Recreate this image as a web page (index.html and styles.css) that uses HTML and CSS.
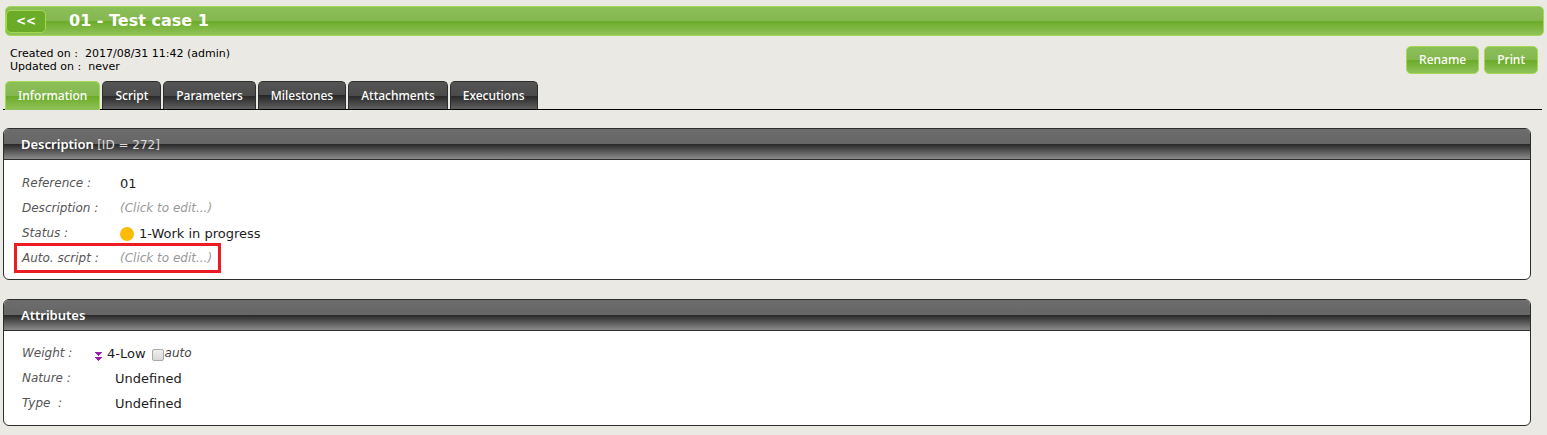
FILE: index.html
```html
<!DOCTYPE html>
<html lang="en">
<head>
<meta charset="utf-8">
<title>01 - Test case 1</title>
<link rel="stylesheet" href="styles.css">
</head>
<body>
<header class="title-bar">
  <button class="back" type="button">&lt;&lt;</button>
  <h1 class="title">01 - Test case 1</h1>
</header>
<div class="toolbar">
  <div class="audit">
    <div class="audit-line"><span>Created on :</span><span>2017/08/31 11:42 (admin)</span></div>
    <div class="audit-line"><span>Updated on :</span><span>never</span></div>
  </div>
  <div class="actions">
    <button class="action" type="button">Rename</button>
    <button class="action" type="button">Print</button>
  </div>
</div>
<nav class="tabs">
  <a class="tab active" href="#information">Information</a>
  <a class="tab" href="#script">Script</a>
  <a class="tab" href="#parameters">Parameters</a>
  <a class="tab" href="#milestones">Milestones</a>
  <a class="tab" href="#attachments">Attachments</a>
  <a class="tab" href="#executions">Executions</a>
</nav>
<main class="panels" id="information">
  <section class="panel">
    <h2 class="panel-head">Description <span class="panel-id">[ID = 272]</span></h2>
    <dl class="fields">
      <div class="row"><dt>Reference :</dt><dd>01</dd></div>
      <div class="row"><dt>Description :</dt><dd class="empty">(Click to edit...)</dd></div>
      <div class="row"><dt>Status :</dt><dd><span class="dot"></span>1-Work in progress</dd></div>
      <div class="row marked"><dt>Auto. script :</dt><dd class="empty">(Click to edit...)</dd></div>
    </dl>
  </section>
  <section class="panel">
    <h2 class="panel-head">Attributes</h2>
    <dl class="fields attributes">
      <div class="row weight"><dt>Weight :</dt><dd>
        <svg class="low" viewBox="0 0 7 9" width="7" height="9" shape-rendering="crispEdges"><path fill="#9c1fae" d="M0 0h7v1h-1v1h-1v1h-1v1h-1v-1h-1v-1h-1v-1h-1zM0 5h7v1h-1v1h-1v1h-1v1h-1v-1h-1v-1h-1v-1h-1z"/></svg>
        <span class="level">4-Low</span>
        <input class="check" type="checkbox" id="auto"><label class="auto" for="auto">auto</label>
      </dd></div>
      <div class="row"><dt>Nature :</dt><dd>Undefined</dd></div>
      <div class="row"><dt>Type &nbsp;:</dt><dd>Undefined</dd></div>
    </dl>
  </section>
</main>
</body>
</html>
```
FILE: styles.css
```css
* { box-sizing: border-box; }
body {
  margin: 0;
  padding: 6px 3px 9px;
  background: #eae9e4;
  color: #1c1c1c;
  font: 13px/25px Verdana, "DejaVu Sans", sans-serif;
}
.title-bar {
  display: flex;
  align-items: center;
  gap: 23px;
  height: 30px;
  margin: 0 0 0 2px;
  border: 1px solid #a5d852;
  border-radius: 5px;
  background: linear-gradient(#8bbf58 0, #85b74f 50%, #6aab27 50%, #90c25a 100%);
}
.back {
  width: 40px;
  height: 23px;
  padding: 0;
  border: 1px solid #a5d852;
  border-radius: 5px;
  background: #6aab27;
  color: #fff;
  font: bold 12px/21px Verdana, "DejaVu Sans", sans-serif;
}
.title {
  margin: 0;
  color: #fff;
  font-size: 16px;
  line-height: 28px;
}
.toolbar {
  display: flex;
  justify-content: space-between;
  padding: 10px 6px 0 7px;
}
.audit {
  padding-top: 1px;
  color: #000;
  font-size: 11px;
  line-height: 13px;
}
.audit-line { display: flex; gap: 7px; }
.actions { display: flex; gap: 5px; }
.action {
  height: 28px;
  padding: 0 12px;
  border: 1px solid #a5d852;
  border-radius: 5px;
  background: linear-gradient(#8bbf58 0, #85b74f 50%, #6aab27 50%, #90c25a 100%);
  color: #fff;
  font: 500 12px/26px "Noto Sans", sans-serif;
}
.tabs {
  display: flex;
  gap: 2px;
  height: 29px;
  margin: 7px 2px 0 0;
  padding-left: 2px;
  border-bottom: 1px solid #000;
}
.tab {
  height: 28px;
  padding: 0 12px;
  border: 1px solid #2e2e2e;
  border-bottom: 0;
  border-radius: 5px 5px 0 0;
  background: linear-gradient(#555 0, #4b4b4b 50%, #272727 50%, #606060 100%);
  color: #fff;
  font: 500 12px/27px "Noto Sans", sans-serif;
  text-decoration: none;
}
.tab.active {
  height: 29px;
  border-color: #a5d852;
  background: linear-gradient(#8bbf58 0, #85b74f 50%, #6aab27 50%, #90c25a 100%);
}
.panels {
  display: grid;
  gap: 19px;
  margin: 18px 13px 0 0;
}
.panel {
  overflow: hidden;
  border: 1px solid #2e2e2e;
  border-radius: 6px;
  background: #fff;
}
.panel-head {
  height: 31px;
  margin: 0;
  padding-left: 17px;
  border-bottom: 1px solid #2e2e2e;
  background: linear-gradient(#6c6c6c 0, #666 50%, #272727 50%, #8b8b8b 100%);
  color: #fff;
  font: 600 13px/31px "Noto Sans", sans-serif;
}
.panel-id {
  color: #ddd;
  font: 12px/31px Verdana, "DejaVu Sans", sans-serif;
}
.fields { margin: 0; padding: 11px 10px 7px; }
.row {
  display: grid;
  grid-template-columns: 98px 1fr;
  padding-left: 8px;
}
.row dt { color: #555; font-size: 12px; font-style: italic; }
.row dd { display: flex; align-items: center; margin: 0; }
.row .empty { color: #999; font-size: 12px; font-style: italic; }
.dot {
  width: 14px;
  height: 14px;
  margin-right: 5px;
  border-radius: 50%;
  background: #fbbc05;
}
.marked {
  width: 207px;
  height: 30px;
  margin-top: -3px;
  margin-bottom: -1px;
  padding-left: 5px;
  border: 3px solid #ed1c24;
}
.attributes { padding: 10px 10px 9px; }
.attributes .row { grid-template-columns: 93px 1fr; }
.attributes .weight { grid-template-columns: 73px 1fr; }
.low { margin: 5px 5px 0 0; }
.check {
  appearance: none;
  width: 12px;
  height: 12px;
  margin: 2px 1px 0 6px;
  border: 1px solid #a9a9a9;
  border-radius: 2px;
  background: linear-gradient(#eee, #d9d9d9);
}
.auto { color: #444; font-size: 12px; font-style: italic; }
```
